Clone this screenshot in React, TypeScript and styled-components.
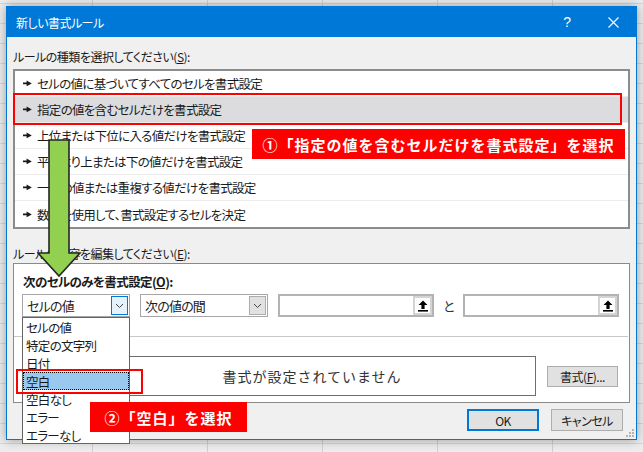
import styled, { createGlobalStyle } from "styled-components";

const GlobalStyle = createGlobalStyle`
  html, body { margin: 0; padding: 0; }
  body {
    font-family: "Noto Sans CJK JP", "Noto Sans", sans-serif;
    font-feature-settings: "palt";
    letter-spacing: -0.5px;
    color: #1a1a1a;
  }
`;

const Desktop = styled.div`
  position: relative;
  width: 643px;
  height: 452px;
  overflow: hidden;
  box-sizing: border-box;
  padding: 6px 0 0 6px;
  background-color: #ededed;
  background-image: linear-gradient(to right, #cfcfcf 1px, transparent 1px),
    linear-gradient(to bottom, #d6d6d6 1px, transparent 1px);
  background-size: 115px 100%, 100% 20px;
  background-position: 92px 0, 0 3px;
`;

const Dialog = styled.div`
  position: relative;
  width: 631px;
  height: 434px;
  box-sizing: border-box;
  border: 1px solid #0078d7;
  background: #f0f0f0;
  box-shadow: 0 0 10px rgba(0, 0, 0, 0.35);
  display: flex;
  flex-direction: column;
`;

const TitleBar = styled.div`
  height: 30px;
  flex: none;
  background: #0078d7;
  color: #fff;
  display: flex;
  align-items: center;
  padding-left: 9px;
  font-size: 12px;
`;

const TitleText = styled.span`
  flex: 1;
`;

const TitleButton = styled.div`
  width: 46px;
  height: 30px;
  display: flex;
  align-items: center;
  justify-content: center;
  font-size: 14px;
  font-family: "Liberation Sans", sans-serif;
`;

const Body = styled.div`
  flex: 1;
  display: flex;
  flex-direction: column;
  padding: 12px 6px 0 6px;
`;

const SectionLabel = styled.div<{ $gap?: number }>`
  font-size: 12px;
  line-height: 16px;
  height: 16px;
  margin-top: ${({ $gap }) => $gap ?? 0}px;
  white-space: nowrap;
`;

const Key = styled.span`
  text-decoration: underline;
`;

const ListBox = styled.div`
  margin-top: 4px;
  height: 160px;
  box-sizing: border-box;
  border: 2px solid #8c8c8c;
  background: #fff;
  display: flex;
  flex-direction: column;
`;

const RuleItem = styled.div<{ $selected?: boolean }>`
  height: 26px;
  box-sizing: border-box;
  display: flex;
  align-items: center;
  gap: 5px;
  padding-left: 8px;
  font-size: 12.5px;
  letter-spacing: -0.7px;
  background: ${({ $selected }) => ($selected ? "#dcdcdf" : "#fff")};
  border-bottom: 1px solid #ececec;
  &:last-child {
    border-bottom: none;
  }
`;

const EditBox = styled.div`
  margin-top: 1px;
  height: 140px;
  box-sizing: border-box;
  border: 1px solid #8a8a8a;
  background: #fff;
  padding: 10px 8px 0 8px;
  display: flex;
  flex-direction: column;
`;

const BoldLabel = styled.div`
  font-size: 12.5px;
  font-weight: bold;
  line-height: 16px;
  height: 16px;
  padding-left: 1px;
  letter-spacing: -0.6px;
`;

const ControlRow = styled.div`
  margin-top: 4px;
  height: 23px;
  display: flex;
  align-items: center;
`;

const Combo = styled.div<{ $w: number; $gap?: number }>`
  width: ${({ $w }) => $w}px;
  margin-left: ${({ $gap }) => $gap ?? 0}px;
  height: 23px;
  box-sizing: border-box;
  border: 1px solid #a6a6a6;
  background: #fff;
  display: flex;
  align-items: center;
  padding-left: 4px;
  font-size: 13px;
  letter-spacing: -0.8px;
`;

const ComboButton = styled.div<{ $active?: boolean }>`
  margin-left: auto;
  margin-right: 1px;
  width: 17px;
  height: 19px;
  box-sizing: border-box;
  border: 1px solid ${({ $active }) => ($active ? "#0078d7" : "#adadad")};
  background: ${({ $active }) => ($active ? "#e5f1fb" : "#e1e1e1")};
  display: flex;
  align-items: center;
  justify-content: center;
`;

const RefInput = styled.div<{ $gap?: number }>`
  width: 156px;
  margin-left: ${({ $gap }) => $gap ?? 0}px;
  height: 23px;
  box-sizing: border-box;
  border: 2px solid #b3b3b3;
  background: #fff;
  display: flex;
  justify-content: flex-end;
`;

const RefButton = styled.div`
  width: 19px;
  height: 19px;
  box-sizing: border-box;
  padding: 2px;
  background: #d4d4d4;
  display: flex;
`;

const RefFace = styled.div`
  flex: 1;
  background: #fff;
  display: flex;
  align-items: center;
  justify-content: center;
`;

const AndText = styled.span`
  width: 29px;
  text-align: center;
  font-size: 13px;
  color: #333;
`;

const Separator = styled.div`
  margin: 19px -7px 0 -8px;
  height: 1px;
  background: #c8c8c8;
`;

const PreviewRow = styled.div`
  margin-top: 19px;
  display: flex;
  align-items: center;
`;

/* the "プレビュー:" caption sits under the open dropdown, so only its space is kept */
const PreviewLabelSpace = styled.span`
  width: 66px;
  flex: none;
`;

const PreviewBox = styled.div`
  width: 448px;
  height: 40px;
  box-sizing: border-box;
  border: 1px solid #6e6e6e;
  display: flex;
  align-items: center;
  justify-content: center;
  font-size: 14px;
  letter-spacing: 1px;
  font-feature-settings: normal;
  color: #333;
`;

const Button = styled.div<{ $primary?: boolean; $w?: number; $h?: number }>`
  width: ${({ $w }) => $w ?? 72}px;
  height: ${({ $h }) => $h ?? 22}px;
  box-sizing: border-box;
  border: ${({ $primary }) =>
    $primary ? "2px solid #0078d7" : "1px solid #adadad"};
  background: #e1e1e1;
  display: flex;
  align-items: center;
  justify-content: center;
  font-size: 12px;
`;

const FormatButton = styled(Button)`
  margin-left: 11px;
`;

const Footer = styled.div`
  margin-top: 6px;
  display: flex;
  justify-content: flex-end;
  gap: 12px;
  padding-right: 7px;
`;

const Grip = styled.svg`
  position: absolute;
  right: 2px;
  bottom: 2px;
`;

/* overlays: annotations and the open dropdown */

const RedFrame = styled.div<{ $x: number; $y: number; $w: number; $h: number }>`
  position: absolute;
  left: ${({ $x }) => $x}px;
  top: ${({ $y }) => $y}px;
  width: ${({ $w }) => $w}px;
  height: ${({ $h }) => $h}px;
  box-sizing: border-box;
  border: 2px solid #ff0000;
`;

const Callout = styled.div<{ $x: number; $y: number; $w: number }>`
  position: absolute;
  left: ${({ $x }) => $x}px;
  top: ${({ $y }) => $y}px;
  width: ${({ $w }) => $w}px;
  height: 30px;
  background: #ff0000;
  color: #fff;
  font-size: 15px;
  font-weight: bold;
  letter-spacing: 1px;
  font-feature-settings: normal;
  display: flex;
  align-items: center;
  justify-content: center;
  white-space: nowrap;
`;

const Arrow = styled.svg`
  position: absolute;
  left: 37px;
  top: 139px;
`;

const DropList = styled.div`
  position: absolute;
  left: 22px;
  top: 317px;
  width: 108px;
  height: 127px;
  box-sizing: border-box;
  border: 1px solid #646464;
  background: #fff;
  display: flex;
  flex-direction: column;
`;

const DropItem = styled.div<{ $selected?: boolean }>`
  height: 18px;
  flex: none;
  box-sizing: border-box;
  display: flex;
  align-items: center;
  padding-left: 3px;
  font-size: 12.5px;
  letter-spacing: -0.7px;
  background: ${({ $selected }) => ($selected ? "#99c9ef" : "transparent")};
  outline: ${({ $selected }) => ($selected ? "1px dotted #000" : "none")};
  outline-offset: -1px;
`;

const Marker = () => (
  <svg width="9" height="7" viewBox="0 0 9 7">
    <path d="M0 2.6h4v1.6H0z M3.6 0.6 L8.8 3.4 L3.6 6.2z" fill="#1a1a1a" />
  </svg>
);

const Chevron = () => (
  <svg width="9" height="6" viewBox="0 0 9 6">
    <path d="M1 1 L4.5 4.5 L8 1" fill="none" stroke="#444" strokeWidth="1" />
  </svg>
);

const RefIcon = () => (
  <svg width="10" height="12" viewBox="0 0 10 12">
    <path d="M5 0.5 L9.5 5 H6.6 V9 H3.4 V5 H0.5z" fill="#000" />
    <rect x="0" y="10" width="10" height="1.6" fill="#000" />
  </svg>
);

const rules = [
  "セルの値に基づいてすべてのセルを書式設定",
  "指定の値を含むセルだけを書式設定",
  "上位または下位に入る値だけを書式設定",
  "平均より上または下の値だけを書式設定",
  "一意の値または重複する値だけを書式設定",
  "数式を使用して、書式設定するセルを決定",
];

const options = [
  "セルの値",
  "特定の文字列",
  "日付",
  "空白",
  "空白なし",
  "エラー",
  "エラーなし",
];

export default function App() {
  return (
    <>
      <GlobalStyle />
      <Desktop>
        <Dialog>
          <TitleBar>
            <TitleText>新しい書式ルール</TitleText>
            <TitleButton>?</TitleButton>
            <TitleButton>
              <svg width="11" height="11" viewBox="0 0 11 11">
                <path d="M0.5 0.5 L10.5 10.5 M10.5 0.5 L0.5 10.5" stroke="#fff" strokeWidth="1.1" />
              </svg>
            </TitleButton>
          </TitleBar>
          <Body>
            <SectionLabel>
              ルールの種類を選択してください(<Key>S</Key>):
            </SectionLabel>
            <ListBox>
              {rules.map((r, i) => (
                <RuleItem key={r} $selected={i === 1}>
                  <Marker />
                  {r}
                </RuleItem>
              ))}
            </ListBox>
            <SectionLabel $gap={17}>
              ルールの内容を編集してください(<Key>E</Key>):
            </SectionLabel>
            <EditBox>
              <BoldLabel>
                次のセルのみを書式設定(<Key>O</Key>):
              </BoldLabel>
              <ControlRow>
                <Combo $w={108}>
                  セルの値
                  <ComboButton $active>
                    <Chevron />
                  </ComboButton>
                </Combo>
                <Combo $w={128} $gap={10}>
                  次の値の間
                  <ComboButton>
                    <Chevron />
                  </ComboButton>
                </Combo>
                <RefInput $gap={10}>
                  <RefButton>
                    <RefFace>
                      <RefIcon />
                    </RefFace>
                  </RefButton>
                </RefInput>
                <AndText>と</AndText>
                <RefInput>
                  <RefButton>
                    <RefFace>
                      <RefIcon />
                    </RefFace>
                  </RefButton>
                </RefInput>
              </ControlRow>
              <Separator />
              <PreviewRow>
                <PreviewLabelSpace />
                <PreviewBox>書式が設定されていません</PreviewBox>
                <FormatButton $w={71} $h={21}>
                  書式(<Key>F</Key>)...
                </FormatButton>
              </PreviewRow>
            </EditBox>
            <Footer>
              <Button $primary>OK</Button>
              <Button>キャンセル</Button>
            </Footer>
          </Body>
          <Grip width="8" height="8" viewBox="0 0 8 8">
            {[
              [6, 0],
              [3, 3],
              [6, 3],
              [0, 6],
              [3, 6],
              [6, 6],
            ].map(([x, y]) => (
              <rect key={`${x}-${y}`} x={x} y={y} width="2" height="2" fill="#b4b4b4" />
            ))}
          </Grip>
        </Dialog>

        <RedFrame $x={13} $y={93} $w={609} $h={32} />
        <Callout $x={252} $y={129} $w={373}>
          ①「指定の値を含むセルだけを書式設定」を選択
        </Callout>

        <Arrow width="45" height="139" viewBox="0 0 45 139">
          <path
            d="M12 1 H32 V114 H43 L22 137 L1 114 H12 Z"
            fill="#92d050"
            stroke="#262626"
            strokeWidth="1.6"
            strokeLinejoin="miter"
          />
        </Arrow>

        <DropList>
          {options.map((o, i) => (
            <DropItem key={o} $selected={i === 3}>
              {o}
            </DropItem>
          ))}
        </DropList>

        <RedFrame $x={16} $y={369} $w={127} $h={25} />
        <Callout $x={90} $y={402} $w={157}>
          ②「空白」を選択
        </Callout>
      </Desktop>
    </>
  );
}
